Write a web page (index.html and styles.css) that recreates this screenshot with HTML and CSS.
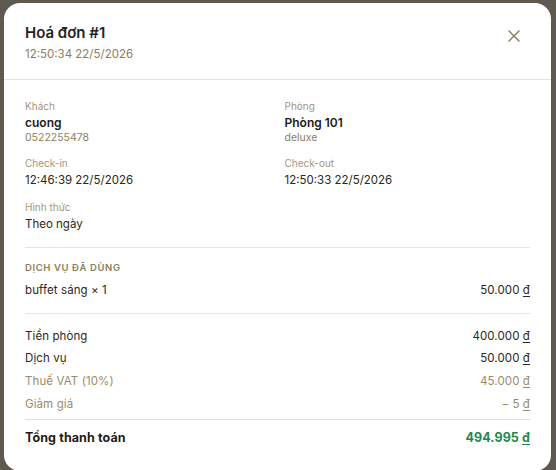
FILE: index.html
```html
<!DOCTYPE html>
<html lang="vi">
<head>
  <meta charset="UTF-8" />
  <meta name="viewport" content="width=device-width, initial-scale=1.0" />
  <title>Hoá đơn #1</title>
  <link rel="stylesheet" href="styles.css">
</head>
<body>
  <div class="modal">
    <div class="modal-head">
      <div>
        <h2 class="modal-title">Hoá đơn #1</h2>
        <div class="modal-time">12:50:34 22/5/2026</div>
      </div>
      <button class="close-btn" aria-label="Đóng">
        <svg width="14" height="14" viewBox="0 0 14 14" fill="none" stroke="currentColor" stroke-width="1.4" stroke-linecap="round">
          <path d="M2 2L12 12M12 2L2 12" />
        </svg>
      </button>
    </div>

    <div class="modal-body">
      <div class="section info-grid">
        <div class="info">
          <div class="label">Khách</div>
          <div class="value strong">cuong</div>
          <div class="sub">0522255478</div>
        </div>
        <div class="info">
          <div class="label">Phòng</div>
          <div class="value strong">Phòng 101</div>
          <div class="sub">deluxe</div>
        </div>
        <div class="info">
          <div class="label">Check-in</div>
          <div class="value">12:46:39 22/5/2026</div>
        </div>
        <div class="info">
          <div class="label">Check-out</div>
          <div class="value">12:50:33 22/5/2026</div>
        </div>
        <div class="info">
          <div class="label">Hình thức</div>
          <div class="value">Theo ngày</div>
        </div>
      </div>

      <!-- dịch vụ -->
      <div class="section services">
        <div class="section-title">Dịch vụ đã dùng</div>
        <div class="row">
          <span>buffet sáng × 1</span>
          <span>50.000 <u>đ</u></span>
        </div>
      </div>

      <!-- tổng -->
      <div class="section totals">
        <div class="row">
          <span>Tiền phòng</span>
          <span>400.000 <u>đ</u></span>
        </div>
        <div class="row">
          <span>Dịch vụ</span>
          <span>50.000 <u>đ</u></span>
        </div>
        <div class="row muted">
          <span>Thuế VAT (10%)</span>
          <span>45.000 <u>đ</u></span>
        </div>
        <div class="row muted">
          <span>Giảm giá</span>
          <span>− 5 <u>đ</u></span>
        </div>
        <div class="row total">
          <span>Tổng thanh toán</span>
          <span class="total-value">494.995 <u>đ</u></span>
        </div>
      </div>
    </div>
  </div>
</body>
</html>
```

FILE: styles.css
```css
body {
  margin: 0;
  padding: 3px 5px 4px 4px;
  background-color: #5f5a51;
  font-family: Inter, 'Noto Sans', sans-serif;
  color: #2b2721;
}
.modal {
  width: 547px;
  background-color: #fff;
  border-radius: 16px;
  box-sizing: border-box;
}
.modal-head {
  display: flex;
  justify-content: space-between;
  align-items: flex-start;
  padding: 20px 21px 17px 21px;
  border-bottom: 1px solid #ebe3d1;
}
.modal-title {
  margin: 0;
  font-size: 15px;
  line-height: 20px;
  font-weight: 600;
  color: #26221c;
}
.modal-time {
  margin-top: 3px;
  font-size: 11.5px;
  line-height: 16px;
  color: #8c7d5e;
}
.close-btn {
  background: none;
  border: none;
  padding: 0;
  margin: 6px 9px 0 0;
  color: #857759;
  cursor: pointer;
  display: flex;
}
.modal-body {
  padding: 0 21px 24px 21px;
}
.section {
  border-bottom: 1px solid #ebe5d8;
}
.info-grid {
  display: grid;
  grid-template-columns: 1fr 1fr;
  column-gap: 14px;
  row-gap: 11px;
  padding: 19px 0 14px 0;
}
.label {
  font-size: 10px;
  line-height: 14px;
  color: #a3977c;
}
.value {
  margin-top: 2px;
  font-size: 11.5px;
  line-height: 17px;
  color: #2b2721;
}
.value.strong {
  font-size: 12px;
  line-height: 16px;
  font-weight: 600;
  color: #1f1b16;
}
.sub {
  font-size: 10.5px;
  line-height: 14px;
  color: #8c7d5e;
}
.services {
  padding: 13px 0 14px 0;
}
.section-title {
  font-size: 9.5px;
  line-height: 14px;
  font-weight: 600;
  letter-spacing: 0.6px;
  text-transform: uppercase;
  color: #8c7d5e;
  margin-bottom: 7px;
}
.row {
  display: flex;
  justify-content: space-between;
  font-size: 11.5px;
  line-height: 16.7px;
  letter-spacing: 0.1px;
  color: #2b2721;
}
.row u {
  text-underline-offset: 2px;
}
.totals {
  border-bottom: none;
  padding-top: 14px;
  display: flex;
  flex-direction: column;
  gap: 6px;
}
.row.muted {
  color: #998b6c;
}
.row.total {
  padding-top: 9px;
  border-top: 1px solid #e9ddbc;
  font-size: 12.5px;
  line-height: 18px;
  font-weight: 700;
  color: #1f1b16;
}
.total-value {
  color: #23874a;
}
```
